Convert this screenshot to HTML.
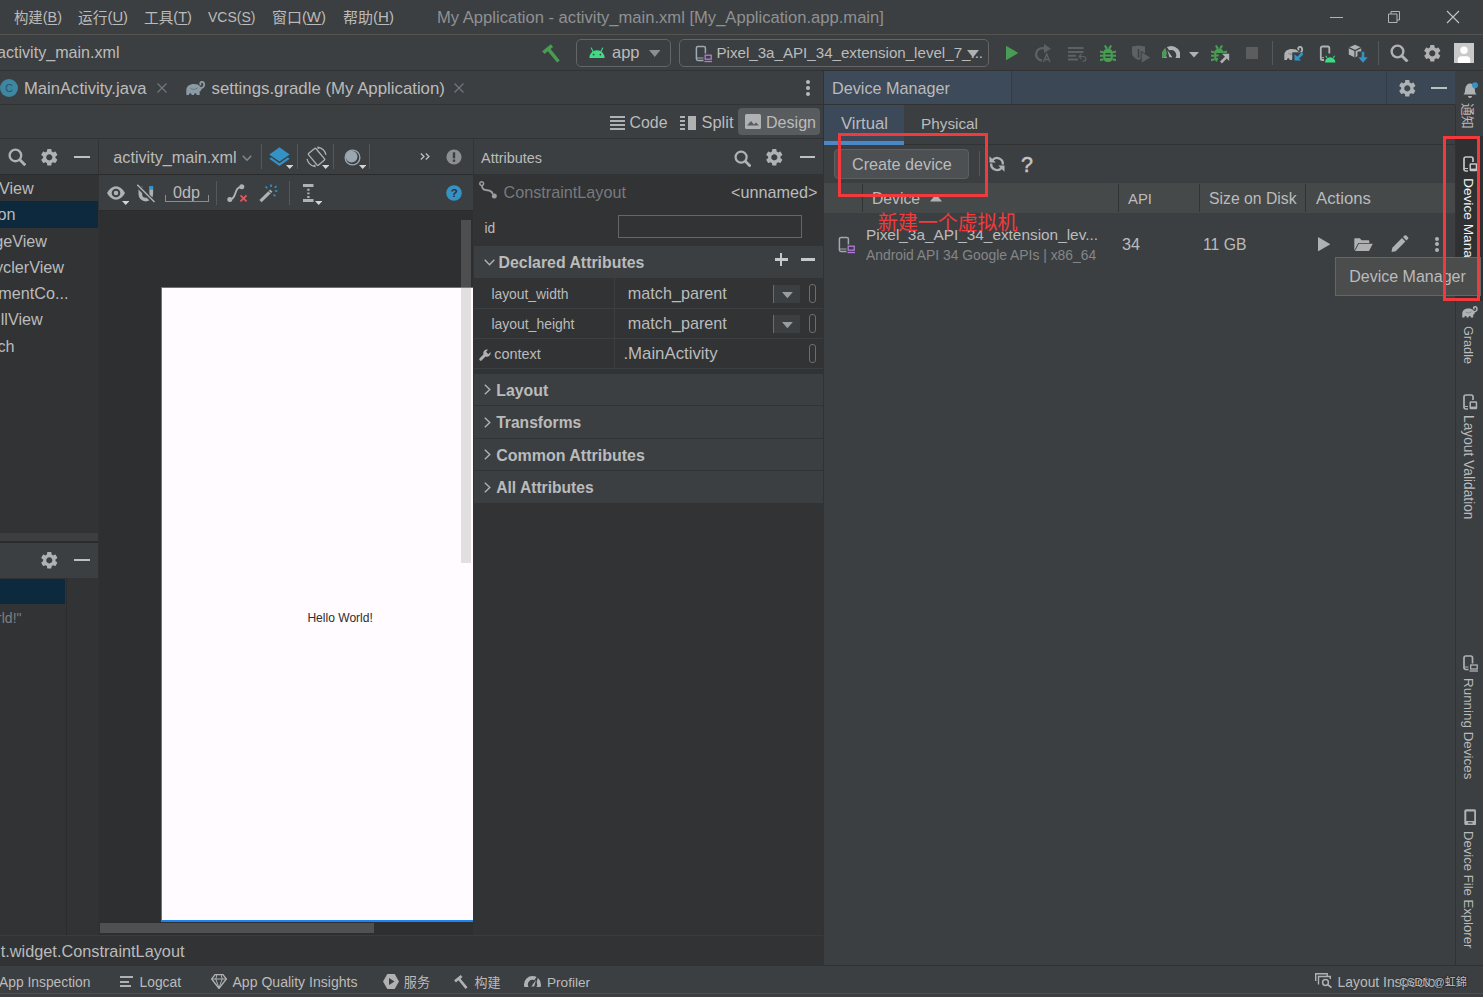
<!DOCTYPE html>
<html><head><meta charset="utf-8"><title>My Application</title>
<style>
html,body{margin:0;padding:0}
body{width:1483px;height:997px;position:relative;overflow:hidden;background:#3c3f41;font-family:"Liberation Sans","Noto Sans CJK SC",sans-serif;color:#bbbbbb}
div,svg{position:absolute}
.t{line-height:24px;white-space:nowrap}
.v{line-height:20px;white-space:nowrap;transform-origin:0 0;transform:rotate(90deg)}
u{text-decoration-thickness:1px;text-underline-offset:2px}
.c{position:relative;top:1px}
</style></head><body>
<div style="left:0px;top:34px;width:1483px;height:1px;background:#555350;"></div>
<div style="left:0px;top:70px;width:1483px;height:1px;background:#323232;"></div>
<div style="left:0px;top:104px;width:824px;height:1px;background:#323232;"></div>
<div style="left:0px;top:138px;width:824px;height:1px;background:#323232;"></div>
<div class="t" style="left:14px;top:5px;font-size:14.39px;"><span class="c">构建</span>(<u>B</u>)</div>
<div class="t" style="left:78px;top:5px;font-size:14.75px;"><span class="c">运行</span>(<u>U</u>)</div>
<div class="t" style="left:144px;top:5px;font-size:14.64px;"><span class="c">工具</span>(<u>T</u>)</div>
<div class="t" style="left:208px;top:5px;font-size:14.01px;">VCS(<u>S</u>)</div>
<div class="t" style="left:272px;top:5px;font-size:14.95px;"><span class="c">窗口</span>(<u>W</u>)</div>
<div class="t" style="left:343px;top:5px;font-size:15.04px;"><span class="c">帮助</span>(<u>H</u>)</div>
<div class="t" style="left:437px;top:6px;font-size:16.58px;color:#8f9193;">My Application - activity_main.xml [My_Application.app.main]</div>
<div style="left:1329.5px;top:17px;width:13px;height:1px;background:#b4b4b4;"></div>
<svg style="left:1387px;top:10px;" width="14" height="14" viewBox="0 0 14 14"><path d="M1.500 4h8.500v8.500h-8.500z" fill="none" stroke="#b4b4b4" stroke-width="1"/><path d="M4 4V1.500h8.500V10H10" fill="none" stroke="#b4b4b4" stroke-width="1"/></svg>
<svg style="left:1446px;top:10px;" width="14" height="14" viewBox="0 0 14 14"><path d="M1 1L13 13M13 1L1 13" fill="none" stroke="#c4c4c4" stroke-width="1.100"/></svg>
<div class="t" style="left:-3px;top:40px;font-size:16.1px;">activity_main.xml</div>
<svg style="left:541px;top:43px;" width="21" height="21" viewBox="0 0 21 21"><path d="M1.200 8.200L9.800 1.200l2.300 2.800-2.600 2.100 9.300 11.300-2.700 2.200L6.800 8.300 3.500 11z" fill="#499c54"/></svg>
<div style="left:576px;top:39px;width:95px;height:28px;border:1px solid #636567;border-radius:5px;box-sizing:border-box;"></div>
<svg style="left:589px;top:47px;" width="16" height="11" viewBox="0 0 16 11"><path d="M0.300 11a7.700 7.700 0 0 1 15.400 0z" fill="#3ddc84"/><path d="M4 4.500L2.300 1M12 4.500L13.700 1" stroke="#3ddc84" stroke-width="1.100" stroke-linecap="round"/><circle cx="4.600" cy="7.600" r=".900" fill="#3c3f41"/><circle cx="11.400" cy="7.600" r=".900" fill="#3c3f41"/></svg>
<div class="t" style="left:612px;top:40px;font-size:16.5px;">app</div>
<svg style="left:648.5px;top:49.8px;" width="11.5" height="7" viewBox="0 0 11.5 7"><path d="M0 0h11.5L5.75 7z" fill="#8c8e90"/></svg>
<div style="left:679px;top:39px;width:310px;height:28px;border:1px solid #636567;border-radius:5px;box-sizing:border-box;"></div>
<svg style="left:694.5px;top:44.5px;" width="19" height="19" viewBox="0 0 19 19"><rect x="1.400" y="1.400" width="9" height="14" rx="1.600" fill="none" stroke="#9eaab3" stroke-width="1.500"/><path d="M2 13h8" stroke="#9eaab3" stroke-width="1"/><rect x="8.500" y="8.500" width="9" height="9.500" fill="#3c3f41"/><rect x="10.200" y="10.200" width="6" height="4" fill="none" stroke="#b07cd8" stroke-width="1.300"/><path d="M9.500 16.500h7.500" stroke="#b07cd8" stroke-width="1.300"/></svg>
<div class="t" style="left:716.5px;top:41px;font-size:15.13px;">Pixel_3a_API_34_extension_level_7_...</div>
<svg style="left:967px;top:50px;" width="12" height="7.6" viewBox="0 0 12 7.6"><path d="M0 0h12L6.0 7.6z" fill="#afb1b3"/></svg>
<svg style="left:1005px;top:45px;" width="14" height="16" viewBox="0 0 14 16"><path d="M1 .700L13.300 8 1 15.300z" fill="#499c54"/></svg>
<svg style="left:1033px;top:43px;" width="20" height="20" viewBox="0 0 20 20"><path d="M12.500 6A6.200 6.200 0 1 0 9 17.500" fill="none" stroke="#5e6163" stroke-width="2.300"/><path d="M11 1l7 4.800-7 4.200z" fill="#5e6163"/><path d="M10.500 19l3.200-8 3.200 8M11.600 16.500h4.200" fill="none" stroke="#5e6163" stroke-width="1.400"/></svg>
<svg style="left:1068px;top:46px;" width="20" height="16" viewBox="0 0 20 16"><path d="M0 2h15.500M0 6h15.500M0 9.800h8M0 13.600h10" stroke="#5e6163" stroke-width="2"/><path d="M11 10.500h4.500a2.300 2.300 0 0 1 0 4.600h-1" fill="none" stroke="#5e6163" stroke-width="1.200"/><path d="M13.500 8L11 10.500l2.500 2.500" fill="none" stroke="#5e6163" stroke-width="1.200"/></svg>
<svg style="left:1100px;top:44.5px;" width="16" height="17.5" viewBox="0 0 16 17.500"><rect x="3.200" y="3.800" width="9.600" height="13.200" rx="4.200" fill="#499c54"/><path d="M4.800 .500L7 3.800M11.200 .500L9 3.800M0 6.500l3.500 1M16 6.500l-3.500 1M0 10.800h3.500M16 10.800h-3.500M0 15.200l3.500-1M16 15.200l-3.500-1" stroke="#499c54" stroke-width="2.100"/><path d="M5.300 8.700h5.400M5.300 12.300h5.400" stroke="#3c3f41" stroke-width="1.500"/></svg>
<svg style="left:1131px;top:44.5px;" width="21" height="19" viewBox="0 0 21 19"><path d="M1 1.500L7.500 .500 14 1.500V8c0 3.500-3.500 5.800-6.500 7C4.500 13.800 1 11.500 1 8z" fill="#5e6163"/><path d="M7.500 4v8.500" stroke="#3c3f41" stroke-width="1.500"/><path d="M8 4h3.500v4" fill="none" stroke="#3c3f41" stroke-width="0"/><path d="M10.200 6.500L20 12.500l-9.800 6z" fill="#5e6163" stroke="#3c3f41" stroke-width="1"/></svg>
<svg style="left:1161.9px;top:46.4px;" width="18.4" height="11.6" viewBox="0 0 18.400 11.600"><circle cx="9.200" cy="9.200" r="7.150" fill="none" stroke="#afb1b3" stroke-width="4.100"/><path d="M2.480 11.650A7.150 7.150 0 0 1 5.840 2.890" fill="none" stroke="#499c54" stroke-width="4.100"/><path d="M3.700 .600L11.700 12H6.900z" fill="#afb1b3" stroke="#3c3f41" stroke-width="1.300"/></svg>
<svg style="left:1189px;top:52px;" width="10" height="5.5" viewBox="0 0 10 5.5"><path d="M0 0h10L5.0 5.5z" fill="#afb1b3"/></svg>
<svg style="left:1210.5px;top:44.5px;" width="19" height="19" viewBox="0 0 19 19"><rect x="3.200" y="3.800" width="9.600" height="13.200" rx="4.200" fill="#499c54"/><path d="M4.800 .500L7 3.800M11.200 .500L9 3.800M0 6.500l3.500 1M16 6.500l-3.500 1M0 10.800h3.500M16 10.800h-3.500M0 15.200l3.500-1M16 15.200l-3.500-1" stroke="#499c54" stroke-width="2.100"/><path d="M5.300 8.700h5.400M5.300 12.300h5.400" stroke="#3c3f41" stroke-width="1.500"/><path d="M8.500 8h11v11H5.500z" fill="#3c3f41"/><path d="M10 17.500L15.300 12.200" stroke="#afb1b3" stroke-width="2.600"/><path d="M11 8.800H18.200V16z" fill="#afb1b3"/></svg>
<div style="left:1246px;top:47px;width:12px;height:12px;background:#5b5d5f;"></div>
<div style="left:1272px;top:41px;width:1px;height:24px;background:#555759;"></div>
<svg style="left:1283.5px;top:46px;" width="19.5" height="14.6" viewBox="0 0 20 15"><path d="M.300 14.300V9.500C.300 5.500 3.800 3.200 8 3.200c3 0 5.500.800 6.800 2.600L16 8c0 1.500-1 2.500-2 2.800v3.500h-3c0-1.300-.700-1.800-1.400-1.800s-1.400.500-1.400 1.800H5.800c0-1.300-.700-1.800-1.400-1.800S3 13 3 14.300z" fill="#afb1b3"/><path d="M14 7.300c3.400.300 4.700-1.800 4.700-3.700 0-1.800-1-2.700-2.300-2.700-1.100 0-1.800.700-1.800 1.600 0 .700.500 1.100 1.100 1.100" fill="none" stroke="#afb1b3" stroke-width="1.900"/><path d="M4.500 7.500c2 1.500 5 1.500 7.500-.500" fill="none" stroke="#3c3f41" stroke-width=".700" opacity=".6"/><path d="M8.500 6.500H20V15H8.500z" fill="#3c3f41"/><path d="M19.300 7.200L13.500 13" stroke="#3592c4" stroke-width="2.700"/><path d="M10.800 8.300V15h6.700z" fill="#3592c4"/></svg>
<svg style="left:1319px;top:45px;" width="17" height="18" viewBox="0 0 17 18"><rect x="1.800" y="1.500" width="8.500" height="13.500" rx="1.600" fill="none" stroke="#afb1b3" stroke-width="1.800"/><path d="M2 12.700h8" stroke="#afb1b3" stroke-width="1"/><rect x="5" y="8.500" width="12" height="9.500" fill="#3c3f41"/><path d="M6 17.500a5.200 5.200 0 0 1 10.400 0z" fill="#3ddc84"/><path d="M8 12.800L6.800 10.700M14.400 12.800l1.200-2.100" stroke="#3ddc84" stroke-width="1.100"/></svg>
<svg style="left:1348px;top:44px;" width="21" height="20" viewBox="0 0 21 20"><path d="M7 .800L13.200 3.600V10.500L7 13.500 .800 10.500V3.600z" fill="#afb1b3"/><path d="M.800 3.600L7 6.500 13.200 3.600M7 6.500v7" fill="none" stroke="#3c3f41" stroke-width="1.200"/><rect x="9.500" y="7.500" width="11" height="12" fill="#3c3f41"/><path d="M15 7.800v7" stroke="#3592c4" stroke-width="2.600"/><path d="M10.300 13.300h9.400L15 18.800z" fill="#3592c4"/></svg>
<div style="left:1378px;top:41px;width:1px;height:24px;background:#555759;"></div>
<svg style="left:1390px;top:43.5px;" width="18.5" height="18.5" viewBox="0 0 18 18"><circle cx="7.3" cy="7.3" r="5.7" fill="none" stroke="#afb1b3" stroke-width="2.3"/><path d="M11.4 11.4L17 17" stroke="#afb1b3" stroke-width="2.8"/></svg>
<svg style="left:1421.7px;top:42.7px;" width="20.6" height="20.6" viewBox="0 0 24 24"><path d="M19.14,12.94c0.04-0.3,0.06-0.61,0.06-0.94c0-0.32-0.02-0.64-0.07-0.94l2.03-1.58c0.18-0.14,0.23-0.41,0.12-0.61l-1.92-3.32c-0.12-0.22-0.37-0.29-0.59-0.22l-2.39,0.96c-0.5-0.38-1.03-0.7-1.62-0.94L14.4,2.81c-0.04-0.24-0.24-0.41-0.48-0.41h-3.84c-0.24,0-0.43,0.17-0.47,0.41L9.25,5.35C8.66,5.59,8.12,5.92,7.63,6.29L5.24,5.33c-0.22-0.08-0.47,0-0.59,0.22L2.74,8.87C2.62,9.08,2.66,9.34,2.86,9.48l2.03,1.58C4.84,11.36,4.8,11.69,4.8,12s0.02,0.64,0.07,0.94l-2.03,1.58c-0.18,0.14-0.23,0.41-0.12,0.61l1.92,3.32c0.12,0.22,0.37,0.29,0.59,0.22l2.39-0.96c0.5,0.38,1.03,0.7,1.62,0.94l0.36,2.54c0.05,0.24,0.24,0.41,0.48,0.41h3.84c0.24,0,0.44-0.17,0.47-0.41l0.36-2.54c0.59-0.24,1.13-0.56,1.62-0.94l2.39,0.96c0.22,0.08,0.47,0,0.59-0.22l1.92-3.32c0.12-0.22,0.07-0.47-0.12-0.61L19.14,12.94z M12,15.6c-1.98,0-3.6-1.62-3.6-3.6s1.62-3.6,3.6-3.6s3.6,1.62,3.6,3.6S13.98,15.6,12,15.6z" fill="#afb1b3"/></svg>
<div style="left:1454px;top:43px;width:20px;height:20px;background:#c9c9c9;"></div>
<svg style="left:1454px;top:43px;" width="20" height="20" viewBox="0 0 20 20"><circle cx="10" cy="7.300" r="3.700" fill="#fff"/><path d="M3.800 20v-3.500c0-2 1.500-3.300 3.500-3.300h5.400c2 0 3.500 1.300 3.500 3.300V20z" fill="#fff"/></svg>
<svg style="left:0px;top:79px;" width="18" height="18" viewBox="0 0 18 18"><circle cx="9" cy="9" r="9" fill="#3e87a2"/><text x="5.200" y="12.800" font-family="Liberation Sans,sans-serif" font-size="10.500" fill="#2a5060">C</text></svg>
<div class="t" style="left:24px;top:77px;font-size:16.63px;">MainActivity.java</div>
<svg style="left:157px;top:83px;" width="10" height="10" viewBox="0 0 10 10"><path d="M.500 .500l9 9M9.500 .500l-9 9" stroke="#6f7b81" stroke-width="1.100"/></svg>
<svg style="left:186.4px;top:80.5px;" width="19.5" height="14.6" viewBox="0 0 20 15"><path d="M.300 14.300V9.500C.300 5.500 3.800 3.200 8 3.200c3 0 5.500.800 6.800 2.600L16 8c0 1.500-1 2.500-2 2.800v3.500h-3c0-1.300-.700-1.800-1.400-1.800s-1.400.500-1.400 1.800H5.800c0-1.300-.700-1.800-1.400-1.800S3 13 3 14.300z" fill="#8a9ba5"/><path d="M14 7.300c3.400.300 4.700-1.800 4.700-3.700 0-1.800-1-2.700-2.300-2.700-1.100 0-1.800.700-1.800 1.600 0 .700.500 1.100 1.100 1.100" fill="none" stroke="#8a9ba5" stroke-width="1.900"/><path d="M4.500 7.500c2 1.500 5 1.500 7.500-.500" fill="none" stroke="#3c3f41" stroke-width=".700" opacity=".6"/></svg>
<div class="t" style="left:211.5px;top:77px;font-size:16.81px;">settings.gradle (My Application)</div>
<svg style="left:454px;top:83px;" width="10" height="10" viewBox="0 0 10 10"><path d="M.500 .500l9 9M9.500 .500l-9 9" stroke="#6f7b81" stroke-width="1.100"/></svg>
<div style="left:806px;top:80.1px;width:4px;height:4px;background:#b8babc;border-radius:50%;"></div>
<div style="left:806px;top:86.1px;width:4px;height:4px;background:#b8babc;border-radius:50%;"></div>
<div style="left:806px;top:91.9px;width:4px;height:4px;background:#b8babc;border-radius:50%;"></div>
<div style="left:823px;top:71px;width:1px;height:895px;background:#323232;"></div>
<div style="left:609.5px;top:115.5px;width:15px;height:2px;background:#afb1b3;"></div>
<div style="left:609.5px;top:119.5px;width:15px;height:2px;background:#afb1b3;"></div>
<div style="left:609.5px;top:123.5px;width:15px;height:2px;background:#afb1b3;"></div>
<div style="left:609.5px;top:127.5px;width:15px;height:2px;background:#afb1b3;"></div>
<div class="t" style="left:629.5px;top:111px;font-size:15.91px;">Code</div>
<div style="left:680px;top:115.5px;width:5px;height:2px;background:#afb1b3;"></div>
<div style="left:680px;top:119.5px;width:5px;height:2px;background:#afb1b3;"></div>
<div style="left:680px;top:123.5px;width:5px;height:2px;background:#afb1b3;"></div>
<div style="left:680px;top:127.5px;width:5px;height:2px;background:#afb1b3;"></div>
<div style="left:688px;top:115.5px;width:7.5px;height:14px;background:#afb1b3;"></div>
<div class="t" style="left:701.5px;top:110px;font-size:16.46px;">Split</div>
<div style="left:738px;top:108px;width:82px;height:27px;background:#585c5e;border-radius:4px;"></div>
<svg style="left:745px;top:114px;" width="16" height="15" viewBox="0 0 16 15"><rect x="0" y="0" width="16" height="15" rx="1.500" fill="#afb1b3"/><path d="M2 11.500l4-4.500 3 3.500 2-2 3 3z" fill="#585c5e"/></svg>
<div class="t" style="left:766px;top:110px;font-size:16.08px;">Design</div>
<div style="left:0px;top:140px;width:98px;height:35px;background:#3c3f41;"></div>
<svg style="left:8px;top:147.5px;" width="18.3" height="18.3" viewBox="0 0 18 18"><circle cx="7.3" cy="7.3" r="5.7" fill="none" stroke="#afb1b3" stroke-width="2.3"/><path d="M11.4 11.4L17 17" stroke="#afb1b3" stroke-width="2.8"/></svg>
<svg style="left:38.7px;top:146.7px;" width="20.6" height="20.6" viewBox="0 0 24 24"><path d="M19.14,12.94c0.04-0.3,0.06-0.61,0.06-0.94c0-0.32-0.02-0.64-0.07-0.94l2.03-1.58c0.18-0.14,0.23-0.41,0.12-0.61l-1.92-3.32c-0.12-0.22-0.37-0.29-0.59-0.22l-2.39,0.96c-0.5-0.38-1.03-0.7-1.62-0.94L14.4,2.81c-0.04-0.24-0.24-0.41-0.48-0.41h-3.84c-0.24,0-0.43,0.17-0.47,0.41L9.25,5.35C8.66,5.59,8.12,5.92,7.63,6.29L5.24,5.33c-0.22-0.08-0.47,0-0.59,0.22L2.74,8.87C2.62,9.08,2.66,9.34,2.86,9.48l2.03,1.58C4.84,11.36,4.8,11.69,4.8,12s0.02,0.64,0.07,0.94l-2.03,1.58c-0.18,0.14-0.23,0.41-0.12,0.61l1.92,3.32c0.12,0.22,0.37,0.29,0.59,0.22l2.39-0.96c0.5,0.38,1.03,0.7,1.62,0.94l0.36,2.54c0.05,0.24,0.24,0.41,0.48,0.41h3.84c0.24,0,0.44-0.17,0.47-0.41l0.36-2.54c0.59-0.24,1.13-0.56,1.62-0.94l2.39,0.96c0.22,0.08,0.47,0,0.59-0.22l1.92-3.32c0.12-0.22,0.07-0.47-0.12-0.61L19.14,12.94z M12,15.6c-1.98,0-3.6-1.62-3.6-3.6s1.62-3.6,3.6-3.6s3.6,1.62,3.6,3.6S13.98,15.6,12,15.6z" fill="#afb1b3"/></svg>
<div style="left:74px;top:155.5px;width:16px;height:2.6px;background:#bdbfc1;"></div>
<div style="left:0px;top:174px;width:98px;height:1px;background:#2b2b2b;"></div>
<div style="left:0px;top:175px;width:98px;height:358px;background:#313335;"></div>
<div style="left:0px;top:201px;width:98px;height:27px;background:#0d293e;"></div>
<div class="t" style="right:1449.3px;top:176px;font-size:16.2px;">View</div>
<div class="t" style="right:1467.4px;top:202px;font-size:16.2px;">on</div>
<div class="t" style="right:1436px;top:229px;font-size:16.2px;">geView</div>
<div class="t" style="right:1419px;top:255px;font-size:16.2px;">yclerView</div>
<div class="t" style="right:1414.5px;top:281px;font-size:16.2px;">mentCo...</div>
<div class="t" style="right:1440.3px;top:307px;font-size:16.2px;">llView</div>
<div class="t" style="right:1468.4px;top:334px;font-size:16.2px;">ch</div>
<div style="left:0px;top:541px;width:98px;height:2px;background:#2b2b2b;"></div>
<svg style="left:38.7px;top:549.7px;" width="20.6" height="20.6" viewBox="0 0 24 24"><path d="M19.14,12.94c0.04-0.3,0.06-0.61,0.06-0.94c0-0.32-0.02-0.64-0.07-0.94l2.03-1.58c0.18-0.14,0.23-0.41,0.12-0.61l-1.92-3.32c-0.12-0.22-0.37-0.29-0.59-0.22l-2.39,0.96c-0.5-0.38-1.03-0.7-1.62-0.94L14.4,2.81c-0.04-0.24-0.24-0.41-0.48-0.41h-3.84c-0.24,0-0.43,0.17-0.47,0.41L9.25,5.35C8.66,5.59,8.12,5.92,7.63,6.29L5.24,5.33c-0.22-0.08-0.47,0-0.59,0.22L2.74,8.87C2.62,9.08,2.66,9.34,2.86,9.48l2.03,1.58C4.84,11.36,4.8,11.69,4.8,12s0.02,0.64,0.07,0.94l-2.03,1.58c-0.18,0.14-0.23,0.41-0.12,0.61l1.92,3.32c0.12,0.22,0.37,0.29,0.59,0.22l2.39-0.96c0.5,0.38,1.03,0.7,1.62,0.94l0.36,2.54c0.05,0.24,0.24,0.41,0.48,0.41h3.84c0.24,0,0.44-0.17,0.47-0.41l0.36-2.54c0.59-0.24,1.13-0.56,1.62-0.94l2.39,0.96c0.22,0.08,0.47,0,0.59-0.22l1.92-3.32c0.12-0.22,0.07-0.47-0.12-0.61L19.14,12.94z M12,15.6c-1.98,0-3.6-1.62-3.6-3.6s1.62-3.6,3.6-3.6s3.6,1.62,3.6,3.6S13.98,15.6,12,15.6z" fill="#afb1b3"/></svg>
<div style="left:74px;top:558.5px;width:16px;height:2.6px;background:#bdbfc1;"></div>
<div style="left:0px;top:578px;width:98px;height:357px;background:#313335;"></div>
<div style="left:0px;top:579px;width:65px;height:25px;background:#0d293e;"></div>
<div style="left:65.5px;top:578px;width:1.5px;height:357px;background:#2b2b2b;"></div>
<div class="t" style="right:1461.5px;top:606px;font-size:14px;color:#7e8082;">rld!"</div>
<div style="left:98px;top:140px;width:1px;height:795px;background:#323232;"></div>
<div style="left:99px;top:140px;width:374px;height:34px;background:#3c3f41;"></div>
<div class="t" style="left:113.3px;top:145px;font-size:16.21px;">activity_main.xml</div>
<svg style="left:242px;top:155px;" width="10" height="6.5" viewBox="0 0 10 6.500"><path d="M.800 .800L5 5.200 9.200 .800" fill="none" stroke="#7f8b91" stroke-width="1.500"/></svg>
<div style="left:261px;top:144px;width:1px;height:25px;background:#555759;"></div>
<div style="left:297px;top:144px;width:1px;height:25px;background:#555759;"></div>
<div style="left:333px;top:144px;width:1px;height:25px;background:#555759;"></div>
<div style="left:369px;top:144px;width:1px;height:25px;background:#555759;"></div>
<svg style="left:268.5px;top:146.5px;" width="21" height="20.5" viewBox="0 0 21 20.500"><path d="M10.500 .300L20.700 7.400 10.500 14.600 .300 7.400z" fill="#3592c4"/><path d="M.300 11.800l2-1.400 8.200 5.800 8.200-5.800 2 1.400-10.200 7.200z" fill="#3592c4"/></svg>
<svg style="left:285.7px;top:165px;" width="7.4" height="4" viewBox="0 0 7.4 4"><path d="M0 0h7.4L3.7 4z" fill="#d4d4d4"/></svg>
<svg style="left:305px;top:146px;" width="23" height="23" viewBox="0 0 23 23"><rect x="6.700" y="3.200" width="9.600" height="15.200" rx=".800" transform="rotate(-40 11.500 10.800)" fill="none" stroke="#afb1b3" stroke-width="1.300"/><path d="M13.500 1.300A9.800 9.800 0 0 1 21 8.800" fill="none" stroke="#afb1b3" stroke-width="1.200"/><path d="M12.300 .200l2.800 1.400-2.400 1.800z" fill="#afb1b3"/><path d="M9.500 20.300A9.800 9.800 0 0 1 2 12.800" fill="none" stroke="#afb1b3" stroke-width="1.200"/><path d="M10.700 21.400l-2.800-1.400 2.400-1.800z" fill="#afb1b3"/></svg>
<svg style="left:321.9px;top:165px;" width="7.4" height="4" viewBox="0 0 7.4 4"><path d="M0 0h7.4L3.7 4z" fill="#d4d4d4"/></svg>
<svg style="left:343.5px;top:148.5px;" width="17" height="17" viewBox="0 0 17 17"><circle cx="8.500" cy="8.500" r="7.400" fill="#3c3f41" stroke="#9aa7b0" stroke-width="1.300"/><circle cx="7.600" cy="7.600" r="5.900" fill="#9aa7b0"/></svg>
<svg style="left:358.5px;top:165px;" width="7.4" height="4" viewBox="0 0 7.4 4"><path d="M0 0h7.4L3.7 4z" fill="#d4d4d4"/></svg>
<svg style="left:420px;top:152.5px;" width="10" height="7" viewBox="0 0 10 7"><path d="M.800 .500L4 3.500 .800 6.500M5.800 .500L9 3.500 5.800 6.500" fill="none" stroke="#c4c4c4" stroke-width="1.200"/></svg>
<svg style="left:445.5px;top:148.5px;" width="16" height="16" viewBox="0 0 16 16"><circle cx="8" cy="8" r="7.600" fill="#8c8e90"/><rect x="6.800" y="3.300" width="2.400" height="6" fill="#3c3f41"/><rect x="6.800" y="10.500" width="2.400" height="2.300" fill="#3c3f41"/></svg>
<div style="left:99px;top:174px;width:374px;height:1.3px;background:#2b2b2b;"></div>
<div style="left:99px;top:175.3px;width:374px;height:34.7px;background:#3c3f41;"></div>
<svg style="left:107px;top:186px;" width="18" height="14" viewBox="0 0 18 14"><path d="M0 7C2.500 2.500 5.500 .200 9 .200S15.500 2.500 18 7c-2.500 4.500-5.500 6.800-9 6.800S2.500 11.500 0 7z" fill="#afb1b3"/><circle cx="9" cy="7" r="4.300" fill="#3c3f41"/><circle cx="9" cy="7" r="2.300" fill="#afb1b3"/></svg>
<svg style="left:121.6px;top:201.4px;" width="7.4" height="4" viewBox="0 0 7.4 4"><path d="M0 0h7.4L3.7 4z" fill="#d4d4d4"/></svg>
<svg style="left:137px;top:183.5px;" width="18" height="19" viewBox="0 0 18 19"><path d="M1.500 2.500v7.700a7.300 7.300 0 0 0 14.600 0V2.500h-3.700v7.700a3.600 3.600 0 0 1-7.200 0V2.500z" fill="#afb1b3"/><rect x="12.400" y="2" width="3.700" height="3.700" fill="#3592c4"/><rect x="1.500" y="2" width="3.700" height="3.700" fill="#3592c4"/><path d="M-.500 .500l18 18" stroke="#3c3f41" stroke-width="4.200"/><path d="M.300 .800l17.200 17.200" stroke="#afb1b3" stroke-width="1.500"/></svg>
<div class="t" style="left:173px;top:180px;font-size:16.18px;">0dp</div>
<div style="left:165px;top:201px;width:44px;height:1px;background:#8a8c8e;"></div>
<div style="left:165px;top:195px;width:1px;height:7px;background:#8a8c8e;"></div>
<div style="left:208px;top:195px;width:1px;height:7px;background:#8a8c8e;"></div>
<div style="left:216px;top:181px;width:1px;height:24px;background:#555759;"></div>
<svg style="left:226px;top:183px;" width="22" height="20" viewBox="0 0 22 20"><path d="M3.800 16.400c7.500 0 3.500-12.600 12-12.600" fill="none" stroke="#afb1b3" stroke-width="1.800"/><circle cx="3.800" cy="16.400" r="2.500" fill="#afb1b3"/><circle cx="15.800" cy="3.800" r="2.500" fill="#afb1b3"/><path d="M14.500 12.300l6 6M20.500 12.300l-6 6" stroke="#db5860" stroke-width="1.900"/></svg>
<svg style="left:259px;top:183px;" width="20" height="20" viewBox="0 0 20 20"><path d="M1.500 18.200L12.300 7.600" stroke="#afb1b3" stroke-width="3.200"/><path d="M9.800 8.200l2.200 2.200" stroke="#3c3f41" stroke-width="1"/><path d="M12 1.500v2.600M6.500 3.500l1.800 1.800M17.500 3l-1.800 1.800M15.800 8h2.600M14.500 11.500l1.800 1.800" stroke="#3592c4" stroke-width="1.600"/></svg>
<div style="left:289px;top:181px;width:1px;height:24px;background:#555759;"></div>
<svg style="left:302.5px;top:184px;" width="11" height="18" viewBox="0 0 11 18"><path d="M0 1.500h10.500M0 16.500h10.500" stroke="#afb1b3" stroke-width="3"/><path d="M5.400 4.800v9.500" stroke="#afb1b3" stroke-width="2.300" stroke-dasharray="1.900 1.700"/></svg>
<svg style="left:314.6px;top:201.2px;" width="7.4" height="4" viewBox="0 0 7.4 4"><path d="M0 0h7.4L3.7 4z" fill="#d4d4d4"/></svg>
<svg style="left:445.5px;top:185px;" width="16" height="16" viewBox="0 0 16 16"><circle cx="8" cy="8" r="7.800" fill="#3592c4"/><text x="4.800" y="12.300" font-family="Liberation Sans,sans-serif" font-size="11.500" font-weight="700" fill="#2d2f31">?</text></svg>
<div style="left:99px;top:210px;width:374px;height:1px;background:#2b2b2b;"></div>
<div style="left:99px;top:211px;width:374px;height:724px;background:#2d2f31;"></div>
<div style="left:160.7px;top:286.7px;width:312.3px;height:635px;background:#1a84f0;"></div>
<div style="left:162px;top:288px;width:311px;height:632px;background:#fffbfe;"></div>
<div class="t" style="left:307.4px;top:606px;font-size:12.07px;color:#2e2e2e;">Hello World!</div>
<div style="left:461px;top:220px;width:10px;height:343px;background:rgba(155,155,155,0.29);"></div>
<div style="left:100px;top:923px;width:274px;height:10px;background:#4e5052;"></div>
<div style="left:473px;top:140px;width:1px;height:795px;background:#313335;"></div>
<div style="left:474px;top:140px;width:349px;height:34px;background:#3c3f41;"></div>
<div class="t" style="left:481px;top:146px;font-size:14.45px;">Attributes</div>
<svg style="left:733.5px;top:149.5px;" width="17.5" height="17.5" viewBox="0 0 18 18"><circle cx="7.3" cy="7.3" r="5.7" fill="none" stroke="#afb1b3" stroke-width="2.3"/><path d="M11.4 11.4L17 17" stroke="#afb1b3" stroke-width="2.8"/></svg>
<svg style="left:763.9px;top:147.2px;" width="20.6" height="20.6" viewBox="0 0 24 24"><path d="M19.14,12.94c0.04-0.3,0.06-0.61,0.06-0.94c0-0.32-0.02-0.64-0.07-0.94l2.03-1.58c0.18-0.14,0.23-0.41,0.12-0.61l-1.92-3.32c-0.12-0.22-0.37-0.29-0.59-0.22l-2.39,0.96c-0.5-0.38-1.03-0.7-1.62-0.94L14.4,2.81c-0.04-0.24-0.24-0.41-0.48-0.41h-3.84c-0.24,0-0.43,0.17-0.47,0.41L9.25,5.35C8.66,5.59,8.12,5.92,7.63,6.29L5.24,5.33c-0.22-0.08-0.47,0-0.59,0.22L2.74,8.87C2.62,9.08,2.66,9.34,2.86,9.48l2.03,1.58C4.84,11.36,4.8,11.69,4.8,12s0.02,0.64,0.07,0.94l-2.03,1.58c-0.18,0.14-0.23,0.41-0.12,0.61l1.92,3.32c0.12,0.22,0.37,0.29,0.59,0.22l2.39-0.96c0.5,0.38,1.03,0.7,1.62,0.94l0.36,2.54c0.05,0.24,0.24,0.41,0.48,0.41h3.84c0.24,0,0.44-0.17,0.47-0.41l0.36-2.54c0.59-0.24,1.13-0.56,1.62-0.94l2.39,0.96c0.22,0.08,0.47,0,0.59-0.22l1.92-3.32c0.12-0.22,0.07-0.47-0.12-0.61L19.14,12.94z M12,15.6c-1.98,0-3.6-1.62-3.6-3.6s1.62-3.6,3.6-3.6s3.6,1.62,3.6,3.6S13.98,15.6,12,15.6z" fill="#afb1b3"/></svg>
<div style="left:799.5px;top:155.5px;width:15.5px;height:2.6px;background:#bdbfc1;"></div>
<div style="left:474px;top:174px;width:349px;height:761px;background:#313335;"></div>
<svg style="left:479px;top:181px;" width="19" height="18" viewBox="0 0 19 18"><circle cx="2.700" cy="2.700" r="1.900" fill="none" stroke="#9a9c9e" stroke-width="1.500"/><path d="M3 4.800C3 12.500 12.800 6 13.600 13" fill="none" stroke="#9a9c9e" stroke-width="1.900"/><circle cx="15.300" cy="15" r="2.500" fill="#9a9c9e"/></svg>
<div class="t" style="left:503.5px;top:180px;font-size:16.21px;color:#787a7c;">ConstraintLayout</div>
<div class="t" style="left:731px;top:180px;font-size:16.21px;">&lt;unnamed&gt;</div>
<div class="t" style="left:484.5px;top:217px;font-size:13.8px;">id</div>
<div style="left:618px;top:215px;width:184px;height:23px;border:1px solid #646668;box-sizing:border-box;"></div>
<div style="left:474px;top:246px;width:349px;height:32px;background:#3c3f41;"></div>
<svg style="left:483.5px;top:259px;" width="11" height="7" viewBox="0 0 11 7"><path d="M.700 .700L5.500 5.800 10.300 .700" fill="none" stroke="#afb1b3" stroke-width="1.400"/></svg>
<div class="t" style="left:498.6px;top:251px;font-size:15.86px;font-weight:700;">Declared Attributes</div>
<div style="left:774.6px;top:258.2px;width:13.4px;height:2.4px;background:#c6c8ca;"></div>
<div style="left:780.1px;top:252.7px;width:2.4px;height:13.4px;background:#c6c8ca;"></div>
<div style="left:801.3px;top:258.2px;width:13.4px;height:2.4px;background:#c6c8ca;"></div>
<div style="left:474px;top:308px;width:349px;height:1px;background:#3c3f41;"></div>
<div style="left:614px;top:278px;width:1px;height:30px;background:#3c3f41;"></div>
<div class="t" style="left:491.4px;top:282px;font-size:13.86px;">layout_width</div>
<div class="t" style="left:627.8px;top:281px;font-size:16.2px;">match_parent</div>
<div style="left:773px;top:284.5px;width:27px;height:18.5px;background:#3c3f41;"></div>
<div style="left:773px;top:284.5px;width:1px;height:18.5px;background:#6b6d6f;"></div>
<svg style="left:782px;top:291.5px;" width="10.8" height="6.3" viewBox="0 0 10.8 6.3"><path d="M0 0h10.8L5.4 6.3z" fill="#9a9c9e"/></svg>
<div style="left:809.3px;top:283.5px;width:6.6px;height:19.5px;border:1px solid #6b6d6f;border-radius:3px;box-sizing:border-box;"></div>
<div style="left:474px;top:338px;width:349px;height:1px;background:#3c3f41;"></div>
<div style="left:614px;top:308px;width:1px;height:30px;background:#3c3f41;"></div>
<div class="t" style="left:491.4px;top:312px;font-size:13.96px;">layout_height</div>
<div class="t" style="left:627.8px;top:311px;font-size:16.2px;">match_parent</div>
<div style="left:773px;top:314.5px;width:27px;height:18.5px;background:#3c3f41;"></div>
<div style="left:773px;top:314.5px;width:1px;height:18.5px;background:#6b6d6f;"></div>
<svg style="left:782px;top:321.5px;" width="10.8" height="6.3" viewBox="0 0 10.8 6.3"><path d="M0 0h10.8L5.4 6.3z" fill="#9a9c9e"/></svg>
<div style="left:809.3px;top:313.5px;width:6.6px;height:19.5px;border:1px solid #6b6d6f;border-radius:3px;box-sizing:border-box;"></div>
<div style="left:474px;top:368px;width:349px;height:1px;background:#3c3f41;"></div>
<div style="left:614px;top:338px;width:1px;height:30px;background:#3c3f41;"></div>
<div class="t" style="left:494.3px;top:342px;font-size:14.43px;">context</div>
<div class="t" style="left:623.4px;top:342px;font-size:16.81px;">.MainActivity</div>
<div style="left:809.3px;top:343.5px;width:6.6px;height:19.5px;border:1px solid #6b6d6f;border-radius:3px;box-sizing:border-box;"></div>
<svg style="left:478.5px;top:348.7px;" width="12.2" height="12" viewBox="0 0 13 13"><path d="M12.300 3.300L10 5.600 7.500 3.100 9.800.800A3.900 3.900 0 0 0 4.800 5.800L.700 9.900a1.500 1.500 0 0 0 2.200 2.200L7 8a3.900 3.900 0 0 0 5.300-4.700z" fill="#afb1b3"/></svg>
<div style="left:474px;top:374px;width:349px;height:31px;background:#3c3f41;"></div>
<svg style="left:484px;top:384.0px;" width="7" height="11" viewBox="0 0 7 11"><path d="M.800 .800L5.800 5.500 .800 10.200" fill="none" stroke="#afb1b3" stroke-width="1.400"/></svg>
<div class="t" style="left:496.2px;top:379px;font-size:15.86px;font-weight:700;">Layout</div>
<div style="left:474px;top:406px;width:349px;height:32px;background:#3c3f41;"></div>
<svg style="left:484px;top:416.5px;" width="7" height="11" viewBox="0 0 7 11"><path d="M.800 .800L5.800 5.500 .800 10.200" fill="none" stroke="#afb1b3" stroke-width="1.400"/></svg>
<div class="t" style="left:496.2px;top:411px;font-size:15.61px;font-weight:700;">Transforms</div>
<div style="left:474px;top:439px;width:349px;height:31px;background:#3c3f41;"></div>
<svg style="left:484px;top:449.0px;" width="7" height="11" viewBox="0 0 7 11"><path d="M.800 .800L5.800 5.500 .800 10.200" fill="none" stroke="#afb1b3" stroke-width="1.400"/></svg>
<div class="t" style="left:496.2px;top:444px;font-size:15.99px;font-weight:700;">Common Attributes</div>
<div style="left:474px;top:471px;width:349px;height:32px;background:#3c3f41;"></div>
<svg style="left:484px;top:481.5px;" width="7" height="11" viewBox="0 0 7 11"><path d="M.800 .800L5.800 5.500 .800 10.200" fill="none" stroke="#afb1b3" stroke-width="1.400"/></svg>
<div class="t" style="left:496.2px;top:476px;font-size:15.64px;font-weight:700;">All Attributes</div>
<div style="left:0px;top:935px;width:823px;height:1px;background:#393b3d;"></div>
<div style="left:0px;top:936px;width:823px;height:30px;background:#313335;"></div>
<div class="t" style="right:1298.5px;top:939px;font-size:16.3px;">t.widget.ConstraintLayout</div>
<div style="left:824px;top:71px;width:631px;height:33px;background:#3b4755;"></div>
<div style="left:824px;top:71px;width:187px;height:33px;background:#3d4a59;"></div>
<div style="left:1011px;top:71px;width:1px;height:33px;background:#323c48;"></div>
<div style="left:1386px;top:71px;width:1px;height:33px;background:#323c48;"></div>
<div style="left:824px;top:104px;width:631px;height:1px;background:#323232;"></div>
<div class="t" style="left:832px;top:76px;font-size:16.22px;">Device Manager</div>
<svg style="left:1396.7px;top:77.7px;" width="20.6" height="20.6" viewBox="0 0 24 24"><path d="M19.14,12.94c0.04-0.3,0.06-0.61,0.06-0.94c0-0.32-0.02-0.64-0.07-0.94l2.03-1.58c0.18-0.14,0.23-0.41,0.12-0.61l-1.92-3.32c-0.12-0.22-0.37-0.29-0.59-0.22l-2.39,0.96c-0.5-0.38-1.03-0.7-1.62-0.94L14.4,2.81c-0.04-0.24-0.24-0.41-0.48-0.41h-3.84c-0.24,0-0.43,0.17-0.47,0.41L9.25,5.35C8.66,5.59,8.12,5.92,7.63,6.29L5.24,5.33c-0.22-0.08-0.47,0-0.59,0.22L2.74,8.87C2.62,9.08,2.66,9.34,2.86,9.48l2.03,1.58C4.84,11.36,4.8,11.69,4.8,12s0.02,0.64,0.07,0.94l-2.03,1.58c-0.18,0.14-0.23,0.41-0.12,0.61l1.92,3.32c0.12,0.22,0.37,0.29,0.59,0.22l2.39-0.96c0.5,0.38,1.03,0.7,1.62,0.94l0.36,2.54c0.05,0.24,0.24,0.41,0.48,0.41h3.84c0.24,0,0.44-0.17,0.47-0.41l0.36-2.54c0.59-0.24,1.13-0.56,1.62-0.94l2.39,0.96c0.22,0.08,0.47,0,0.59-0.22l1.92-3.32c0.12-0.22,0.07-0.47-0.12-0.61L19.14,12.94z M12,15.6c-1.98,0-3.6-1.62-3.6-3.6s1.62-3.6,3.6-3.6s3.6,1.62,3.6,3.6S13.98,15.6,12,15.6z" fill="#afb1b3"/></svg>
<div style="left:1431.2px;top:86.5px;width:15.5px;height:2.6px;background:#bdbfc1;"></div>
<div style="left:824px;top:105px;width:80px;height:36px;background:#3c4958;"></div>
<div style="left:904px;top:144px;width:551px;height:1px;background:#323232;"></div>
<div style="left:824px;top:141px;width:80px;height:4px;background:#4a88c7;"></div>
<div class="t" style="left:841px;top:112px;font-size:16.69px;">Virtual</div>
<div class="t" style="left:921px;top:112px;font-size:15.32px;">Physical</div>
<div style="left:834px;top:149px;width:135px;height:30px;background:#4c5052;border:1px solid #5e6060;border-radius:4px;box-sizing:border-box;"></div>
<div class="t" style="left:852px;top:152px;font-size:16.22px;">Create device</div>
<div style="left:979px;top:151px;width:1px;height:25px;background:#555759;"></div>
<svg style="left:988.2px;top:155px;" width="18" height="18" viewBox="0 0 18 18"><g transform="translate(18,0) scale(-1,1)"><path d="M3.200 9.500A5.900 5.900 0 0 1 13.500 5M14.800 8.500A5.900 5.900 0 0 1 4.500 13" fill="none" stroke="#afb1b3" stroke-width="2.300"/><path d="M16.500 1.200v6.300h-6.300zM1.500 16.800v-6.300h6.300z" fill="#afb1b3"/></g></svg>
<div class="t" style="left:1021px;top:153px;font-size:21.5px;color:#c2c4c6;-webkit-text-stroke:.500px #c2c4c6;">?</div>
<div style="left:824px;top:183px;width:631px;height:30px;background:#45494a;"></div>
<div style="left:862px;top:184px;width:1px;height:28px;background:#323537;"></div>
<div style="left:1118px;top:184px;width:1px;height:28px;background:#323537;"></div>
<div style="left:1199px;top:184px;width:1px;height:28px;background:#323537;"></div>
<div style="left:1305px;top:184px;width:1px;height:28px;background:#323537;"></div>
<div class="t" style="left:872px;top:187px;font-size:15.71px;">Device</div>
<svg style="left:930px;top:194px;" width="12" height="7.5" viewBox="0 0 12 7.500"><path d="M0 7.500h12L6 0z" fill="#afb1b3"/></svg>
<div class="t" style="left:1128px;top:187px;font-size:14.9px;">API</div>
<div class="t" style="left:1209px;top:187px;font-size:15.75px;">Size on Disk</div>
<div class="t" style="left:1316px;top:187px;font-size:16.78px;">Actions</div>
<svg style="left:837.5px;top:235.5px;" width="19" height="19" viewBox="0 0 19 19"><rect x="1.400" y="1.400" width="9" height="14" rx="1.600" fill="none" stroke="#9eaab3" stroke-width="1.500"/><path d="M2 13h8" stroke="#9eaab3" stroke-width="1"/><rect x="8.500" y="8.500" width="9" height="9.500" fill="#3c3f41"/><rect x="10.200" y="10.200" width="6" height="4" fill="none" stroke="#b07cd8" stroke-width="1.300"/><path d="M9.500 16.500h7.500" stroke="#b07cd8" stroke-width="1.300"/></svg>
<div class="t" style="left:866px;top:223px;font-size:15.36px;">Pixel_3a_API_34_extension_lev...</div>
<div class="t" style="left:866px;top:243px;font-size:13.86px;color:#848688;">Android API 34 Google APIs | x86_64</div>
<div class="t" style="left:1122px;top:232px;font-size:16.19px;">34</div>
<div class="t" style="left:1203px;top:233px;font-size:15.76px;">11 GB</div>
<svg style="left:1317.5px;top:237px;" width="12.5" height="14.4" viewBox="0 0 12.500 14.400"><path d="M0 0L12.500 7.200 0 14.400z" fill="#afb1b3"/></svg>
<svg style="left:1353.5px;top:237.5px;" width="19" height="13" viewBox="0 0 19 13"><path d="M.300 12.500V1.200C.300 .600.700.200 1.300.200h4.500l1.800 2h6.700c.600 0 1 .400 1 1V5H4.200z" fill="#afb1b3"/><path d="M1 13L4.800 5.800h14L15 13z" fill="#afb1b3"/></svg>
<svg style="left:1391px;top:235px;" width="17.5" height="17.5" viewBox="0 0 17.500 17.500"><path d="M.500 17l.800-4.200L11 3.100l3.400 3.400L4.700 16.200z" fill="#afb1b3"/><path d="M12 2.100L13.600.500c.500-.500 1.200-.500 1.700 0l1.700 1.700c.500.500.500 1.200 0 1.700L15.400 5.500z" fill="#afb1b3"/></svg>
<div style="left:1435px;top:237px;width:4px;height:4px;background:#afb1b3;border-radius:50%;"></div>
<div style="left:1435px;top:242.3px;width:4px;height:4px;background:#afb1b3;border-radius:50%;"></div>
<div style="left:1435px;top:247.7px;width:4px;height:4px;background:#afb1b3;border-radius:50%;"></div>
<div style="left:1455px;top:105px;width:1px;height:861px;background:#323232;"></div>
<div style="left:1456px;top:136px;width:27px;height:165px;background:#2e3032;"></div>
<svg style="left:1463px;top:81.5px;" width="15" height="16" viewBox="0 0 15 16"><path d="M.500 12.500c1.800-1.500 1.300-3.500 1.800-6C2.800 3.500 4.500 1.500 7 1.500s4.200 2 4.700 5c.500 2.500 0 4.500 1.800 6z" fill="#afb1b3"/><path d="M5 14h4a2 2 0 0 1-4 0z" fill="#afb1b3"/><circle cx="12" cy="3.200" r="3" fill="#3592c4"/></svg>
<div class="v" style="left:1476.8px;top:102.7px;font-size:12.84px;">通知</div>
<svg style="left:1462.5px;top:156px;" width="15" height="16" viewBox="0 0 15 16"><rect x="1" y="1" width="9" height="14" rx="1.800" fill="none" stroke="#c4c6c8" stroke-width="1.700"/><path d="M1.500 12.500h8" stroke="#c4c6c8" stroke-width="1"/><rect x="5" y="6" width="10" height="10" fill="#2e3032"/><rect x="6.500" y="7.200" width="7.700" height="8" rx="1.300" fill="#c4c6c8"/><rect x="8" y="8.800" width="4.700" height="3.800" fill="#2e3032"/></svg>
<div class="v" style="left:1478px;top:178.2px;font-size:13.69px;color:#f4f4f4;">Device Manager</div>
<svg style="left:1462px;top:305.6px;" width="16" height="12.0" viewBox="0 0 20 15"><path d="M.300 14.300V9.500C.300 5.500 3.800 3.200 8 3.200c3 0 5.500.800 6.800 2.600L16 8c0 1.500-1 2.500-2 2.800v3.500h-3c0-1.300-.700-1.800-1.400-1.800s-1.400.500-1.400 1.800H5.800c0-1.300-.700-1.800-1.400-1.800S3 13 3 14.300z" fill="#afb1b3"/><path d="M14 7.300c3.400.300 4.700-1.800 4.700-3.700 0-1.800-1-2.700-2.300-2.700-1.100 0-1.800.700-1.800 1.600 0 .700.500 1.100 1.100 1.100" fill="none" stroke="#afb1b3" stroke-width="1.900"/><path d="M4.500 7.500c2 1.500 5 1.500 7.500-.500" fill="none" stroke="#3c3f41" stroke-width=".700" opacity=".6"/></svg>
<div class="v" style="left:1478px;top:326.2px;font-size:12.66px;">Gradle</div>
<svg style="left:1462.5px;top:394px;" width="15" height="16" viewBox="0 0 15 16"><rect x="1" y="1" width="9" height="14" rx="1.800" fill="none" stroke="#afb1b3" stroke-width="1.700"/><path d="M1.500 12.500h8" stroke="#afb1b3" stroke-width="1"/><rect x="5" y="6" width="10" height="10" fill="#3c3f41"/><rect x="6.500" y="7.200" width="7.700" height="8" rx="1.300" fill="#afb1b3"/><rect x="8" y="8.800" width="4.700" height="3.800" fill="#3c3f41"/></svg>
<div class="v" style="left:1478px;top:415px;font-size:13.75px;">Layout Validation</div>
<svg style="left:1462.5px;top:654.5px;" width="15.5" height="17" viewBox="0 0 15.500 17"><rect x="1" y="1" width="8.500" height="13.500" rx="1.800" fill="none" stroke="#afb1b3" stroke-width="1.700"/><path d="M1.500 12h8" stroke="#afb1b3" stroke-width="1"/><rect x="5.500" y="8.500" width="10" height="8.500" fill="#3c3f41"/><rect x="7.700" y="10" width="6.500" height="4" fill="none" stroke="#afb1b3" stroke-width="1.300"/><path d="M6.500 16h9" stroke="#afb1b3" stroke-width="1.300"/></svg>
<div class="v" style="left:1478px;top:677.6px;font-size:13.41px;">Running Devices</div>
<svg style="left:1463.5px;top:808.5px;" width="12.5" height="16.5" viewBox="0 0 12.500 16.500"><rect x=".300" y=".300" width="11.900" height="15.900" rx="2" fill="#afb1b3"/><rect x="2.300" y="2.500" width="7.900" height="9.500" fill="#3c3f41"/><rect x="4" y="13.300" width="4.500" height="1.200" fill="#3c3f41"/></svg>
<div class="v" style="left:1478px;top:831.2px;font-size:13.11px;">Device File Explorer</div>
<div style="left:1335px;top:256.5px;width:146px;height:39.5px;background:#4b4d4d;border:1px solid #636567;box-sizing:border-box;"></div>
<div class="t" style="left:1349.2px;top:264px;font-size:16.02px;">Device Manager</div>
<div style="left:0px;top:965px;width:1483px;height:1px;background:#2f3133;"></div>
<div style="left:0px;top:966px;width:1483px;height:31px;background:#3c3f41;"></div>
<div style="left:0px;top:993px;width:1483px;height:1px;background:#4a4c4e;"></div>
<div class="t" style="left:-1px;top:970px;font-size:13.84px;">App Inspection</div>
<div style="left:119.5px;top:976px;width:13.5px;height:2px;background:#afb1b3;"></div>
<div style="left:119.5px;top:980.5px;width:9px;height:2px;background:#afb1b3;"></div>
<div style="left:119.5px;top:985px;width:11.5px;height:2px;background:#afb1b3;"></div>
<div class="t" style="left:139.5px;top:970px;font-size:13.83px;">Logcat</div>
<svg style="left:210.5px;top:973.5px;" width="16" height="15.5" viewBox="0 0 16 15.500"><path d="M4 .700h8L15.300 5 8 14.500 .700 5z" fill="none" stroke="#afb1b3" stroke-width="1.300"/><path d="M.700 5h14.600M5.800 1L4.800 5 8 14 11.200 5 10.200 1" fill="none" stroke="#afb1b3" stroke-width="1"/></svg>
<div class="t" style="left:232.5px;top:970px;font-size:14.05px;">App Quality Insights</div>
<svg style="left:383px;top:973.8px;" width="16" height="15" viewBox="0 0 16 15"><path d="M4.300 0h7.400L16 7.500 11.700 15H4.300L0 7.500z" fill="#afb1b3"/><path d="M6 4l5.500 3.500L6 11z" fill="#3c3f41"/></svg>
<div class="t" style="left:403.8px;top:971px;font-size:13.11px;">服务</div>
<svg style="left:453px;top:973.5px;" width="16.5" height="16" viewBox="0 0 21 21"><path d="M1.200 8.200L9.800 1.200l2.300 2.800-2.600 2.100 9.300 11.300-2.700 2.200L6.800 8.300 3.500 11z" fill="#afb1b3"/></svg>
<div class="t" style="left:474.5px;top:971px;font-size:13.01px;">构建</div>
<svg style="left:523.8px;top:976.2px;" width="17" height="10.7" viewBox="0 0 18.400 11.600"><circle cx="9.200" cy="9.200" r="7.150" fill="none" stroke="#afb1b3" stroke-width="4.100"/><path d="M14.700 .600L6.700 12H11.500z" fill="#afb1b3" stroke="#3c3f41" stroke-width="1.300"/></svg>
<div class="t" style="left:547px;top:971px;font-size:13.58px;">Profiler</div>
<svg style="left:1314.5px;top:972.8px;" width="17" height="15" viewBox="0 0 17 15"><path d="M.700 8V.700h11.500V3" fill="none" stroke="#afb1b3" stroke-width="1.400"/><path d="M3.500 11.500V3.500h11.800V6" fill="none" stroke="#afb1b3" stroke-width="1.400"/><circle cx="10.500" cy="9.500" r="2.900" fill="none" stroke="#afb1b3" stroke-width="1.500"/><path d="M12.700 11.700l3.800 3" stroke="#afb1b3" stroke-width="1.700"/></svg>
<div class="t" style="left:1337.6px;top:970px;font-size:13.86px;">Layout Inspector</div>
<div class="t" style="left:1399.3px;top:970px;font-size:11.01px;color:rgba(235,235,235,0.82);text-shadow:0 0 2px #111,0 0 1px #111;">CSDN @虹錦</div>
<div style="left:838px;top:133px;width:150px;height:64px;border:3px solid #f23a3c;box-sizing:border-box;"></div>
<div style="left:1443px;top:136px;width:37.2px;height:165px;border:3px solid #f23a3c;box-sizing:border-box;"></div>
<div class="t" style="left:878px;top:210px;font-size:19.93px;color:#f23a3c;font-family:'Noto Sans CJK SC',sans-serif;">新建一个虚拟机</div>
</body></html>
